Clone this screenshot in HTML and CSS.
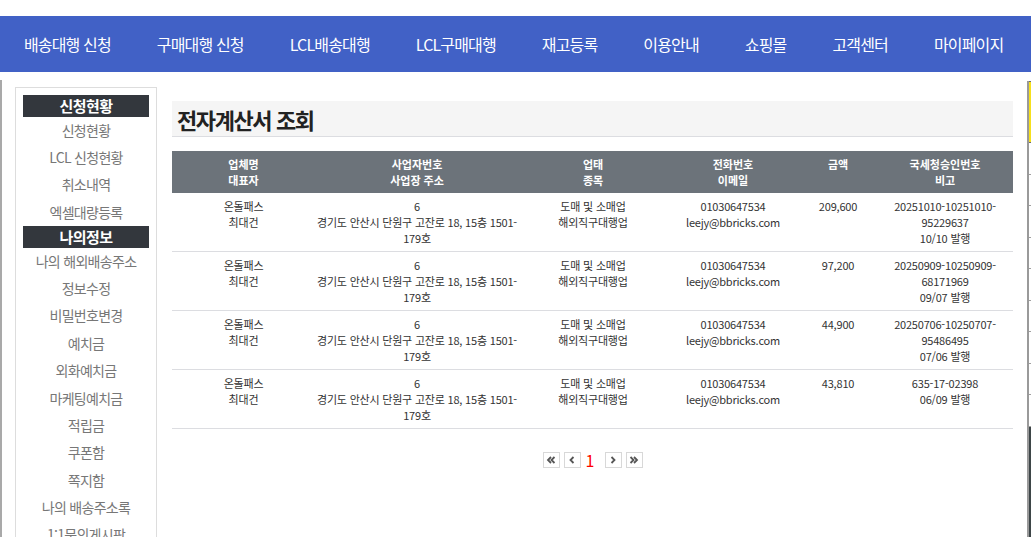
FILE: index.html
```html
<!DOCTYPE html>
<html lang="ko">
<head>
<meta charset="utf-8">
<title>전자계산서 조회</title>
<link rel="stylesheet" href="styles.css">
</head>
<body>
<div class="topline"></div>
<nav class="gnb">
  <a class="gnb-item" href="#">배송대행 신청</a>
  <a class="gnb-item" href="#">구매대행 신청</a>
  <a class="gnb-item" href="#">LCL배송대행</a>
  <a class="gnb-item" href="#">LCL구매대행</a>
  <a class="gnb-item" href="#">재고등록</a>
  <a class="gnb-item" href="#">이용안내</a>
  <a class="gnb-item" href="#">쇼핑몰</a>
  <a class="gnb-item" href="#">고객센터</a>
  <a class="gnb-item" href="#">마이페이지</a>
</nav>

<div class="quick-left"></div>
<aside class="quick-right">
  <div class="quick-top"></div>
  <div class="quick-row"></div>
  <div class="quick-row"></div>
  <div class="quick-row"></div>
  <div class="quick-row"></div>
  <div class="quick-row"></div>
  <div class="quick-row"></div>
  <div class="quick-row"></div>
  <div class="quick-row"></div>
  <div class="quick-row"></div>
  <div class="quick-dark"></div>
</aside>

<div class="wrap">
  <aside class="lnb">
    <div class="lnb-head">신청현황</div>
    <a class="lnb-link" href="#">신청현황</a>
    <a class="lnb-link" href="#">LCL 신청현황</a>
    <a class="lnb-link" href="#">취소내역</a>
    <a class="lnb-link" href="#">엑셀대량등록</a>
    <div class="lnb-head">나의정보</div>
    <a class="lnb-link" href="#">나의 해외배송주소</a>
    <a class="lnb-link" href="#">정보수정</a>
    <a class="lnb-link" href="#">비밀번호변경</a>
    <a class="lnb-link" href="#">예치금</a>
    <a class="lnb-link" href="#">외화예치금</a>
    <a class="lnb-link" href="#">마케팅예치금</a>
    <a class="lnb-link" href="#">적립금</a>
    <a class="lnb-link" href="#">쿠폰함</a>
    <a class="lnb-link" href="#">쪽지함</a>
    <a class="lnb-link" href="#">나의 배송주소록</a>
    <a class="lnb-link" href="#">1:1문의게시판</a>
  </aside>

  <main class="content">
    <h2 class="page-title">전자계산서 조회</h2>

    <table class="bill-table">
      <colgroup>
        <col class="c-company">
        <col class="c-biz">
        <col class="c-type">
        <col class="c-phone">
        <col class="c-amount">
        <col class="c-nts">
      </colgroup>
      <thead>
        <tr>
          <th>업체명<br>대표자</th>
          <th>사업자번호<br>사업장 주소</th>
          <th>업태<br>종목</th>
          <th>전화번호<br>이메일</th>
          <th>금액</th>
          <th>국세청승인번호<br>비고</th>
        </tr>
      </thead>
      <tbody>
        <tr>
          <td>온돌패스<br>최대건</td>
          <td>6<br>경기도 안산시 단원구 고잔로 18, 15층 1501-<wbr>179호</td>
          <td>도매 및 소매업<br>해외직구대행업</td>
          <td>01030647534<br>leejy@bbricks.com</td>
          <td>209,600</td>
          <td>20251010-10251010-<wbr>95229637<br>10/10 발행</td>
        </tr>
        <tr>
          <td>온돌패스<br>최대건</td>
          <td>6<br>경기도 안산시 단원구 고잔로 18, 15층 1501-<wbr>179호</td>
          <td>도매 및 소매업<br>해외직구대행업</td>
          <td>01030647534<br>leejy@bbricks.com</td>
          <td>97,200</td>
          <td>20250909-10250909-<wbr>68171969<br>09/07 발행</td>
        </tr>
        <tr>
          <td>온돌패스<br>최대건</td>
          <td>6<br>경기도 안산시 단원구 고잔로 18, 15층 1501-<wbr>179호</td>
          <td>도매 및 소매업<br>해외직구대행업</td>
          <td>01030647534<br>leejy@bbricks.com</td>
          <td>44,900</td>
          <td>20250706-10250707-<wbr>95486495<br>07/06 발행</td>
        </tr>
        <tr>
          <td>온돌패스<br>최대건</td>
          <td>6<br>경기도 안산시 단원구 고잔로 18, 15층 1501-<wbr>179호</td>
          <td>도매 및 소매업<br>해외직구대행업</td>
          <td>01030647534<br>leejy@bbricks.com</td>
          <td>43,810</td>
          <td>635-17-02398<br>06/09 발행</td>
        </tr>
      </tbody>
    </table>

    <div class="paging">
      <a class="pg-btn" href="#" aria-label="처음">
        <svg viewBox="0 0 10 10" width="10" height="10"><path d="M5 2 L2 5 L5 8 M8.5 2 L5.5 5 L8.5 8" fill="none" stroke="#555" stroke-width="1.8"/></svg>
      </a>
      <a class="pg-btn" href="#" aria-label="이전">
        <svg viewBox="0 0 10 10" width="10" height="10"><path d="M6.5 2 L3.5 5 L6.5 8" fill="none" stroke="#555" stroke-width="1.8"/></svg>
      </a>
      <span class="pg-num">1</span>
      <a class="pg-btn" href="#" aria-label="다음">
        <svg viewBox="0 0 10 10" width="10" height="10"><path d="M3.5 2 L6.5 5 L3.5 8" fill="none" stroke="#555" stroke-width="1.8"/></svg>
      </a>
      <a class="pg-btn" href="#" aria-label="마지막">
        <svg viewBox="0 0 10 10" width="10" height="10"><path d="M1.5 2 L4.5 5 L1.5 8 M5 2 L8 5 L5 8" fill="none" stroke="#555" stroke-width="1.8"/></svg>
      </a>
    </div>
  </main>
</div>
</body>
</html>
```
FILE: styles.css
```css
* { box-sizing: border-box; }

html, body {
  margin: 0;
  padding: 0;
  background: #fff;
  font-family: "Noto Sans CJK KR", "Noto Sans", sans-serif;
  color: #333;
  overflow: hidden;
}

a { text-decoration: none; color: inherit; }

.topline { height: 16px; background: #fff; }

/* main navigation bar */
.gnb {
  height: 56px;
  background: #4161c6;
  display: flex;
  align-items: center;
  padding-left: 1px;
}
.gnb-item {
  color: #fff;
  font-size: 16px;
  letter-spacing: -0.85px;
  padding: 0 23px;
  white-space: nowrap;
  line-height: 56px;
}

.quick-left {
  position: fixed;
  left: 0;
  top: 80px;
  bottom: 0;
  width: 2px;
  background: #a9a9a9;
}
.quick-right {
  position: fixed;
  left: 1027px;
  top: 81px;
  width: 80px;
  bottom: 0;
  border-left: 2px solid #9a9a9a;
  background: #fff;
  display: flex;
  flex-direction: column;
}
.quick-top {
  height: 62px;
  background: #f6e01d;
  border: 1px solid #6b6b6b;
  border-left: 0;
}
.quick-row {
  height: 31.5px;
  border-bottom: 1px solid #a0a0a0;
}
.quick-dark {
  flex: 1;
  background: #3e4648;
}

/* page body */
.wrap {
  display: flex;
  align-items: flex-start;
  gap: 15px;
  padding: 15px 0 0 15px;
}

/* left menu */
.lnb {
  width: 142px;
  flex: none;
  border: 1px solid #ddd;
  border-bottom: 0;
  padding: 7px 7px 0;
  display: flex;
  flex-direction: column;
  align-items: stretch;
}
.lnb-head {
  background: #33373d;
  color: #fff;
  font-size: 15px;
  font-weight: bold;
  text-align: center;
  height: 21.5px;
  line-height: 21.5px;
  letter-spacing: -0.5px;
}
.lnb-link {
  color: #777;
  font-size: 14px;
  letter-spacing: -0.7px;
  text-align: center;
  height: 27.4px;
  line-height: 27.4px;
  white-space: nowrap;
}

/* content */
.content {
  width: 841px;
  flex: none;
  padding-top: 14px;
}
.page-title {
  margin: 0;
  height: 36px;
  background: #f5f5f5;
  border-bottom: 1px solid #dcdde1;
  font-size: 22px;
  font-weight: bold;
  color: #222;
  letter-spacing: -1.4px;
  line-height: 36px;
  padding-left: 5px;
}

.bill-table {
  width: 841px;
  margin-top: 14px;
  border-collapse: collapse;
  table-layout: fixed;
  font-size: 11px;
  line-height: 16px;
}
.c-company { width: 143px; }
.c-biz { width: 204px; }
.c-type { width: 148px; }
.c-phone { width: 132px; }
.c-amount { width: 78px; }
.c-nts { width: 136px; }

.bill-table th {
  background: #6c737a;
  color: #fff;
  font-weight: bold;
  font-size: 11px;
  height: 41px;
  padding: 5px 1px;
  vertical-align: top;
}
.bill-table td {
  text-align: center;
  vertical-align: top;
  padding: 5px 1px 5px;
  border-bottom: 1px solid #dcdde1;
  color: #333;
  letter-spacing: -0.2px;
}

/* pagination */
.paging {
  display: flex;
  justify-content: center;
  align-items: center;
  gap: 4px;
  margin-top: 23px;
}
.pg-btn {
  width: 17px;
  height: 16px;
  border: 1px solid #d8d8d8;
  display: flex;
  align-items: center;
  justify-content: center;
}
.pg-num {
  color: #f00;
  font-size: 16px;
  width: 16px;
  text-align: left;
  padding-left: 1px;
  line-height: 16px;
}
```
